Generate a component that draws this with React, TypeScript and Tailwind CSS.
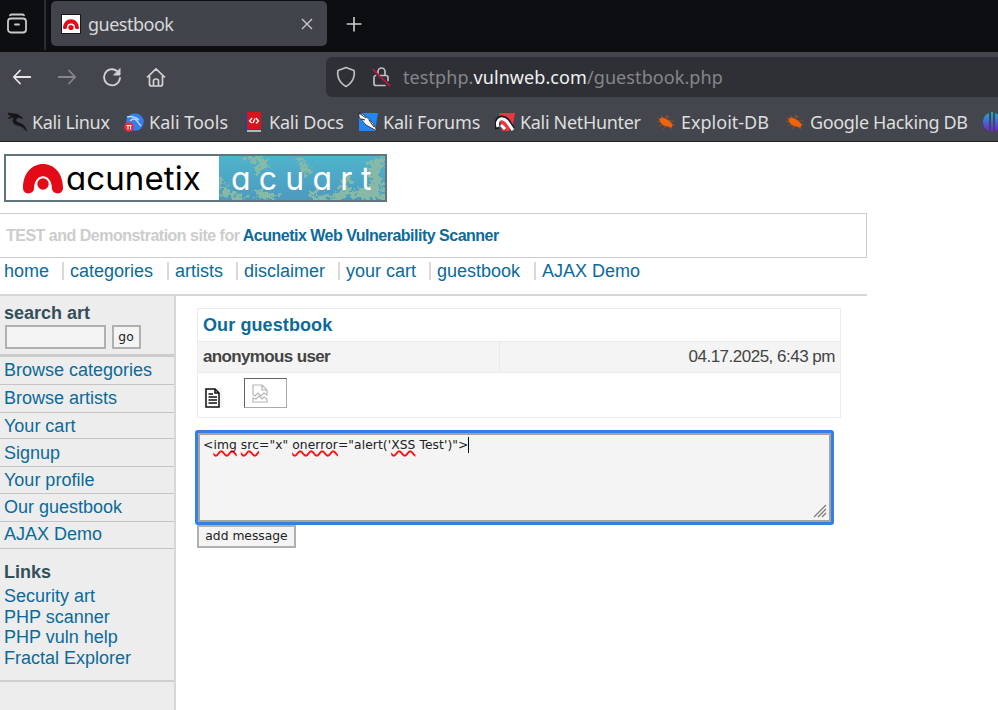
import React from "react";

const ui = "font-['Noto_Sans',sans-serif]";

function Bookmark({ children, label, ml, track = "" }: { children: React.ReactNode; label: string; ml: string; track?: string }) {
  return (
    <div className={"flex shrink-0 items-center " + ml}>
      <svg width="20" height="20" viewBox="0 0 20 20" className="shrink-0">{children}</svg>
      <span className={"ml-[5px] whitespace-nowrap text-[18px] leading-6 " + track}>{label}</span>
    </div>
  );
}

const bug = (
  <g fill="#f0620c" stroke="#f0620c">
    <path d="M3.500 7.500L6 5.500L9 6.500L13.500 9L16.500 12.500L15.500 15.500L12 14.500L8 13.500L5 11Z" strokeWidth=".4" />
    <path d="M1 5.500L5 7M5 3L7 6M1 9.500L5 9.500M3 14L8 12M7 17L10 14M11 3L11 7M13 9L18.500 9M15 12L19 13M13 14L16 17.500M9 4L14 5" strokeWidth=".7" opacity=".55" fill="none" />
  </g>
);

const dragon = "M1 1C5 2 8 1.500 11 2.500L16 6.500L12 5.500C8 6 8 9.500 11 10.500C15 12 18 13 19.500 19C17 15.500 14 14 10 13C5 12 5 7 8 5L1 6.500L5 4L2 3Z";

const sideLinks = [
  ["Browse categories", "h-7 pt-[3px]"],
  ["Browse artists", "h-7 pt-[3px]"],
  ["Your cart", "h-[26px] pt-[3px]"],
  ["Signup", "h-7 pt-1"],
  ["Your profile", "h-[27px] pt-[3px]"],
  ["Our guestbook", "h-7 pt-[3px]"],
  ["AJAX Demo", "h-[27px] pt-[2px]"],
];

const nav = [
  ["home", "w-[66px]"],
  ["categories", "w-[105px]"],
  ["artists", "w-[69px]"],
  ["disclaimer", "w-[102px]"],
  ["your cart", "w-[91px]"],
  ["guestbook", "w-[105px]"],
  ["AJAX Demo", "w-[110px]"],
];

const bad = "underline decoration-wavy decoration-[#ff1010] decoration-[1.5px] [text-decoration-skip-ink:none] underline-offset-1";

export default function App() {
  return (
    <div className="flex h-[710px] w-[998px] flex-col overflow-hidden bg-white font-['Liberation_Sans',Arial,sans-serif] text-[18px] leading-5">
      <div className={"flex h-[52px] shrink-0 bg-[#0d0e12] text-[#d8d8da] " + ui}>
        <div className="flex h-[50px] w-[46px] items-start border-r-2 border-[#2b2c31] pl-[6px] pt-[13px]">
          <svg width="22" height="22" viewBox="0 0 22 22" fill="none" stroke="#c9c9c9" strokeWidth="1.800" strokeLinecap="round">
            <path d="M4 2.200Q4.500 1.500 6 1.500H16Q17.500 1.500 18 2.200M9 11.500H13" />
            <rect x="2" y="5.500" width="18" height="14" rx="3" />
          </svg>
        </div>
        <div className="ml-[5px] mt-px flex h-[45px] w-[276px] items-center rounded-[5px] bg-[#42444b] pl-[10px]">
          <svg width="20" height="20" viewBox="0 0 20 20">
            <rect x=".5" y=".5" width="19" height="19" fill="#fff" stroke="#17171a" />
            <path d="M2 14.500C2 2 18 2 18 14.500Q14.500 16 14 13.500A4 4 0 0 0 6 13.500Q5.500 16 2 14.500Z" fill="#e30b17" />
            <circle cx="10" cy="13.500" r="2.600" fill="#e30b17" />
          </svg>
          <span className="ml-[7px] text-[18px] leading-6 tracking-[-0.5px]">guestbook</span>
          <svg className="ml-auto mr-[14px]" width="12" height="12" viewBox="0 0 12 12" fill="none" stroke="#cdcdd0" strokeWidth="1.300"><path d="M1 1L11 11M11 1L1 11" /></svg>
        </div>
        <svg className="ml-[19px] mt-[16px]" width="16" height="16" viewBox="0 0 16 16" fill="none" stroke="#d0d0d0" strokeWidth="1.600"><path d="M8 1V15.500M.8 8H15.500" /></svg>
      </div>

      <div className={"flex h-[90px] shrink-0 flex-col border-b border-[#202126] bg-[#44464d] text-[#dedede] " + ui}>
        <div className="flex h-[50px] shrink-0 items-center pl-[12px]">
          <svg width="20" height="20" viewBox="0 0 20 20" fill="none" stroke="#e6e6e6" strokeWidth="1.800" strokeLinecap="round" strokeLinejoin="round"><path d="M8 3.500L1.800 10L8 16.500M2 10H18.300" /></svg>
          <svg className="ml-[25px]" width="20" height="20" viewBox="0 0 20 20" fill="none" stroke="#85868b" strokeWidth="1.800" strokeLinecap="round" strokeLinejoin="round"><path d="M12 3.500L18.200 10L12 16.500M18 10H1.700" /></svg>
          <svg className="ml-[25px]" width="20" height="20" viewBox="0 0 20 20" fill="none" stroke="#d2d2d2" strokeWidth="1.800" strokeLinecap="round"><path d="M15 4A8 8 0 1 0 18 11" /><path d="M18 2V8H12Z" fill="#d2d2d2" strokeWidth="1" strokeLinejoin="round" /></svg>
          <svg className="ml-[24px]" width="20" height="20" viewBox="0 0 20 20" fill="none" stroke="#d2d2d2" strokeWidth="1.700" strokeLinecap="round" strokeLinejoin="round"><path d="M1.500 10L10 1.800L18.500 10M3.500 8.500V17Q3.500 19 5.500 19H14.500Q16.500 19 16.500 17V8.500M7.500 18.500V14Q7.500 12 10 12T12.500 14V18.500" /></svg>
          <div className="ml-[160px] flex h-10 grow items-center rounded-l-[6px] bg-[#2f3035] pl-[10px]">
            <svg width="20" height="22" viewBox="0 0 20 22" fill="none" stroke="#c0c0c2" strokeWidth="1.700" strokeLinejoin="round"><path d="M10 1.500L18 4.500Q19 8 17.500 12Q15.500 17.500 10 20.500Q4.500 17.500 2.500 12Q1 8 2 4.500Z" /></svg>
            <svg className="ml-[15px]" width="20" height="22" viewBox="0 0 20 22" fill="none" stroke="#c0c0c2" strokeWidth="1.700" strokeLinecap="round"><path d="M7 7V5.500A3.500 3.500 0 0 1 14 5.500V9M8.500 9.500H15Q17 9.500 17 11.500V14.500M14 19.500H5Q3 19.500 3 17.500V11.500Q3 10 4.500 9.500" /><path d="M2 3.500L18.500 19.500" stroke="#d3123f" strokeWidth="1.700" /></svg>
            <span className="ml-[12px] whitespace-nowrap text-[18px] leading-6 tracking-[0.08px] text-[#85868a]">testphp.<span className="text-[#f0f0f0]">vulnweb.com</span>/guestbook.php</span>
          </div>
        </div>
        <div className="flex h-10 shrink-0 items-center overflow-hidden pl-[7px]">
          <Bookmark ml="w-[102px]" label="Kali Linux" track="tracking-[-0.35px]"><path d={dragon} fill="#151619" stroke="#151619" strokeWidth=".7" /></Bookmark>
          <Bookmark ml="ml-[15px] w-[106px]" label="Kali Tools">
            <circle cx="11" cy="10" r="8.800" fill="#347ff0" />
            <path d="M3 5Q9 3 15 8M6 9Q10 5 13 9T17 14" stroke="#b9d6ff" strokeWidth="1.500" fill="none" />
            <circle cx="5" cy="15" r="4.800" fill="#f02b40" /><path d="M2.500 13.500H7.500M4 13V17.500M6.500 13V17.500" stroke="#fff" />
          </Bookmark>
          <Bookmark ml="ml-[14px] w-[100px]" label="Kali Docs" track="tracking-[-0.2px]">
            <path d="M2 0H17V17H4Q2 17 2 19Z" fill="#d8151b" /><path d="M2 1V19" stroke="#164b96" strokeWidth="2" /><path d="M3 19H17" stroke="#ddd" strokeWidth="1.500" />
            <path d="M8 6L5.500 9L8 11M12 6L14.500 9L12 11.500M11 6.500L9 11" stroke="#fff" strokeWidth="1.300" fill="none" />
          </Bookmark>
          <Bookmark ml="ml-[14px] w-[122px]" label="Kali Forums" track="tracking-[-0.22px]">
            <path d="M1 1H20L17 19H1Z" fill="#2286f8" /><path d="M1 1L5 2L15 11L19 19L8 13L1 5Z" fill="#fff" stroke="#222a31" strokeWidth=".8" /><path d="M1 1L8 6M3 7L7 8M11 8L16 15" stroke="#20252b" />
          </Bookmark>
          <Bookmark ml="ml-[15px] w-[146px]" label="Kali NetHunter" track="tracking-[-0.33px]">
            <path d="M4 1H20L18 12L14 19H7Z" fill="#ed3440" /><path d="M2 17C0 9 4 5 8 6C13 7 13 10 18 17" fill="none" stroke="#15171b" strokeWidth="4.500" /><path d="M3 15C1 9 5 6 8 7C13 8 13 12 18 18M6 13L10 17" fill="none" stroke="#fff" strokeWidth="3" />
          </Bookmark>
          <Bookmark ml="ml-[15px] w-[114px]" label="Exploit-DB">{bug}</Bookmark>
          <Bookmark ml="ml-[15px] w-[182px]" label="Google Hacking DB" track="tracking-[-0.34px]">{bug}</Bookmark>
          <svg className="ml-[15px] shrink-0" width="20" height="20" viewBox="0 0 20 20"><defs><linearGradient id="orb" x2="0" y2="1"><stop stopColor="#12b5c6" /><stop offset="1" stopColor="#7a18e8" /></linearGradient></defs><path d="M7 1V19C-1 16-1 4 7 1M9 0H11V20H9ZM13 1C21 4 21 16 13 19Z" fill="url(#orb)" /></svg>
        </div>
      </div>

      <div className="ml-1 mt-3 flex h-12 w-[383px] shrink-0 border-2 border-[#60757f]">
        <div className="flex w-[213px] items-center pl-[17px]">
          <svg width="40" height="30" viewBox="0 0 40 30" className="mt-[2px] shrink-0"><path d="M0 24C0 9 9 0 20 0S40 9 40 24C40 31 30 31 29 25C29 8 11 8 11 25C10 31 0 31 0 24Z" fill="#e30b17" /><circle cx="20" cy="20" r="5.700" fill="#e30b17" /></svg>
          <span className="ml-[3px] mt-[-1px] whitespace-nowrap font-['Inter',sans-serif] text-[33px] leading-9 tracking-[0.1px] text-black [font-feature-settings:'cv11']">acunetix</span>
        </div>
        <div className="grid w-[166px] overflow-hidden bg-[#4aa6c2]">
          <svg width="166" height="44" className="col-start-1 row-start-1">
            <defs>
              <filter id="frost" x="-20%" y="-20%" width="140%" height="140%"><feTurbulence type="fractalNoise" baseFrequency=".22" numOctaves="4" seed="8" /><feDisplacementMap in="SourceGraphic" scale="20" xChannelSelector="R" yChannelSelector="G" /></filter>
              <linearGradient id="sea" x2="0" y2="1"><stop stopColor="#4fb4cb" /><stop offset="1" stopColor="#4c9ac0" /></linearGradient>
            </defs>
            <rect width="166" height="44" fill="url(#sea)" />
            <g filter="url(#frost)" fill="none" stroke="#86b9a6" strokeLinecap="round">
              <path d="M0 26L6 36L24 44M28 2L46 4L40 14M40 38L55 42M82 4L88 17M92 38L103 42L116 44" strokeWidth="7" />
              <path d="M164 2L154 13L160 30L142 38L164 42M128 27L122 40" strokeWidth="10" />
            </g>
          </svg>
          <span className="col-start-1 row-start-1 self-center whitespace-nowrap pl-[12px] pt-px font-['Inter',sans-serif] text-[32px] leading-9 tracking-[8.200px] text-white [font-feature-settings:'cv11']">acuart</span>
        </div>
      </div>

      <div className="mt-[11px] flex h-[45px] w-[867px] shrink-0 items-center border border-l-0 border-[#cccccc] pl-[6px] text-[16px] font-bold tracking-[-0.5px] text-[#cccccc]">
        <span className="whitespace-pre">TEST and Demonstration site for <span className="text-[#0b6a9b]">Acunetix Web Vulnerability Scanner</span></span>
      </div>
      <div className="flex h-[38px] w-[867px] shrink-0 border-b-2 border-[#d7d7d7] pl-[4px] pt-[3px] text-[#0b6a9b]">
        {nav.map(([n, w], i) => (
          <div key={n} className={"flex h-5 shrink-0 " + w}>
            <span className="whitespace-nowrap">{n}</span>
            {i < 6 && <i className="ml-auto mr-[6px] mt-px h-[18px] w-[2px] bg-[#d9d9d9]" />}
          </div>
        ))}
      </div>

      <div className="flex grow">
        <div className="w-[176px] shrink-0 border-r-2 border-[#d7d7d7] bg-[#ededed] text-[#0b6a9b]">
          <div className="h-[61px] border-b-3 border-[#cccccc] pl-[5px] pt-[7px]">
            <div className="-ml-px h-[22px] font-bold text-[#334f5a]">search art</div>
            <div className="flex">
              <div className="h-6 w-[101px] border-2 border-[#b0b0b0] bg-[#f4f4f4]" />
              <div className="ml-[6px] flex h-6 w-[29px] items-center justify-center border-2 border-[#b0b0b0] bg-[#f4f4f4] pb-px pr-px font-['DejaVu_Sans',sans-serif] text-[12.300px] text-[#222]">go</div>
            </div>
          </div>
          {sideLinks.map(([n, c]) => <div key={n} className={"border-b border-[#c5c5c5] pl-[4px] " + c}>{n}</div>)}
          <div className="h-[133px] border-b-2 border-[#cfcfcf] pl-[4px] pt-[13px]">
            <div className="h-6 font-bold text-[#334f5a]">Links</div>
            <div className="h-[21px]">Security art</div>
            <div className="h-5">PHP scanner</div>
            <div className="h-[21px]">PHP vuln help</div>
            <div>Fractal Explorer</div>
          </div>
        </div>
        <div className="ml-[21px] mt-[12px] w-[644px]">
          <div className="h-[110px] border border-[#ececec]">
            <div className="h-8 pl-[5px] pt-[6px] font-bold tracking-[0.1px] text-[#0b6a9b]">Our guestbook</div>
            <div className="flex h-8 border-y border-[#ebebeb] bg-[#f4f4f4] text-[17px] text-[#444]">
              <div className="w-[301px] pl-[5px] pt-[5px] font-bold tracking-[-0.64px]">anonymous user</div>
              <div className="flex grow justify-end border-l border-[#e9e9e9] pr-[5px] pt-[5px] tracking-[-0.5px]">04.17.2025, 6:43 pm</div>
            </div>
            <div className="flex items-start pl-[6px]">
              <svg className="mt-[15px] bg-[#f4f4f4]" width="18" height="20" viewBox="0 0 18 20" fill="none" stroke="#111" strokeWidth="1.500"><path d="M2 1H11L15 5V19H2Z" fill="#fff" /><path d="M11 1V5H15M4.500 6H9M4.500 9H13M4.500 12H13M4.500 15H13" /></svg>
              <div className="ml-[22px] mt-[5px] h-[30px] w-[43px] border border-t-[#626262] border-l-[#626262] border-r-[#aaa] border-b-[#aaa] pl-[7px] pt-[5px]">
                <svg width="16" height="19" viewBox="0 0 16 19" fill="none" stroke="#b5b5b5" strokeWidth="1.200"><path d="M1 11V1H10L15 6V11L12 9L9 12L6 9L3 12ZM10 1V6H15M1 18V14L4 15L7 12L10 15L12 13L15 15V18Z" /></svg>
              </div>
            </div>
          </div>
          <div className="-ml-[2px] mt-[12px] h-[95px] w-[639px] rounded-[3px] border-[3px] border-[#347fe0] bg-white">
            <div className="flex h-[89px] flex-col justify-between border-2 border-[#a3a3a3] bg-[#f4f4f4] pl-[3px] font-['DejaVu_Sans',sans-serif] text-[12.300px] leading-5 text-[#222]">
              <div className="flex h-5 items-center tracking-[0.08px]">
                <span className="whitespace-pre">&lt;<span className={bad}>img</span> <span className={bad}>src</span>="x" <span className={bad}>onerror</span>="alert('<span className={bad}>XSS</span> Test')"&gt;</span>
                <i className="h-4 w-px bg-black" />
              </div>
              <svg className="mb-[2px] mr-[2px] self-end" width="14" height="14" viewBox="0 0 14 14" stroke="#777" strokeWidth="1.200"><path d="M1 13L13 1M5 13L13 5M9 13L13 9" /></svg>
            </div>
          </div>
          <div className="flex h-[23px] w-[99px] items-center justify-center border-2 border-[#b0b0b0] bg-[#f4f4f4] pb-px font-['DejaVu_Sans',sans-serif] text-[12.300px] text-[#222]">add message</div>
        </div>
      </div>
    </div>
  );
}
